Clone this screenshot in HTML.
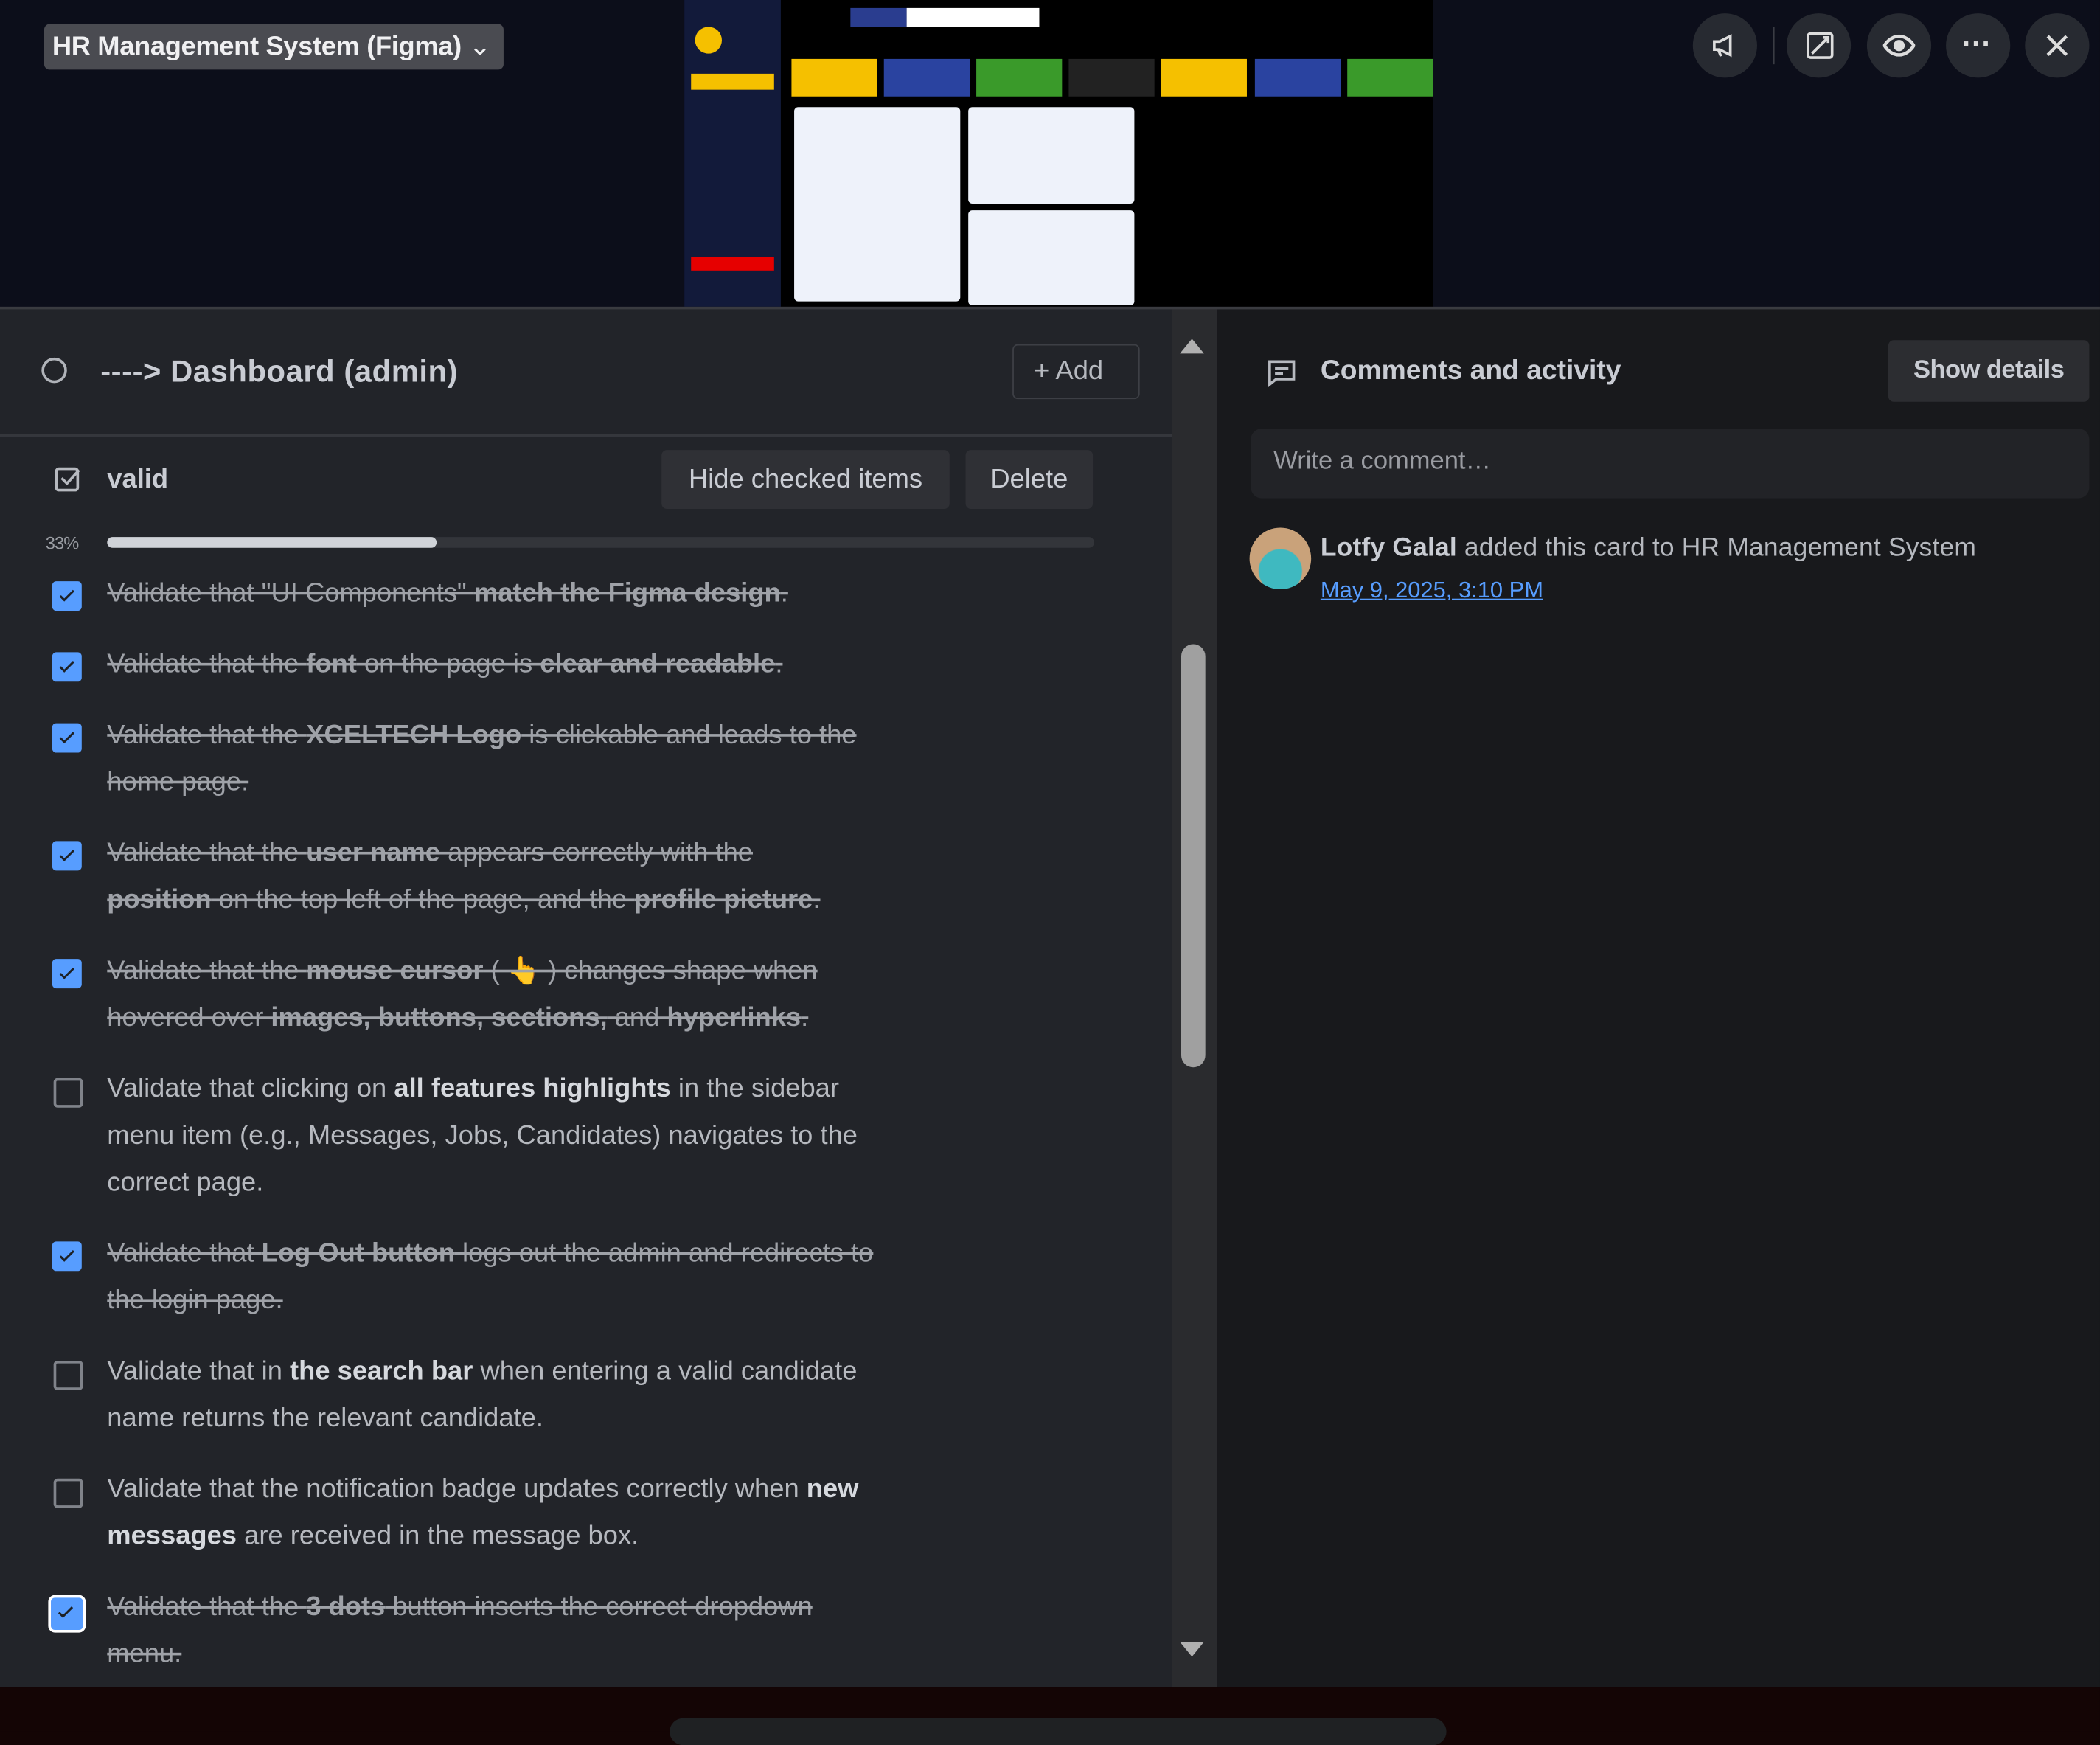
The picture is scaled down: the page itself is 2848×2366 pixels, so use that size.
<!DOCTYPE html>
<html><head><meta charset="utf-8">
<style>
html,body{margin:0;padding:0;width:2848px;height:2348px;overflow:hidden;background:#140505}
#s{position:absolute;left:0;top:0;width:1568px;height:1293px;transform:scale(1.8163,1.8159);transform-origin:0 0;font-family:"Liberation Sans",sans-serif;color:#c9ccd3;background:#0c0e1a}
.a{position:absolute}
.ic{position:absolute;width:48px;height:48px;border-radius:50%;background:#272a31;top:10px}
.it{position:absolute;left:80px;font-size:20px;line-height:35px;letter-spacing:0;width:640px;color:#b6b9bf}
.it.d{text-decoration:line-through;color:#9fa2a8}
.cb{position:absolute;left:39px;width:22px;height:22px;border-radius:3px;background:#579dff}
.cb svg{position:absolute;left:3px;top:3px}
.ub{position:absolute;left:40px;width:18px;height:18px;border:2px solid #80838a;border-radius:3px}
b{color:inherit}
</style></head><body><div id="s">
<div class="a" style="left:33px;top:18px;width:343px;height:34px;background:#4a4b51;border-radius:4px"></div>
<div class="a" style="left:39px;top:22px;font-size:20px;line-height:26px;font-weight:bold;color:#f0f0f2;letter-spacing:-0.2px">HR Management System (Figma) <span style="font-weight:normal">⌄</span></div>
<div class="a" style="left:511px;top:0;width:559px;height:229px;background:#000"></div>
<div class="a" style="left:511px;top:0;width:72px;height:229px;background:#121a3a"></div>
<div class="a" style="left:516px;top:55px;width:62px;height:12px;background:#f5c000"></div>
<div class="a" style="left:516px;top:192px;width:62px;height:10px;background:#e60000"></div>
<div class="a" style="left:519px;top:20px;width:20px;height:20px;border-radius:50%;background:#f5c000"></div>
<div class="a" style="left:635px;top:6px;width:42px;height:14px;background:#2a3d8f"></div>
<div class="a" style="left:677px;top:6px;width:99px;height:14px;background:#fff"></div>
<div class="a" style="left:591px;top:44px;width:64px;height:28px;background:#f5c000"></div>
<div class="a" style="left:660px;top:44px;width:64px;height:28px;background:#2a43a0"></div>
<div class="a" style="left:729px;top:44px;width:64px;height:28px;background:#3a9a2a"></div>
<div class="a" style="left:798px;top:44px;width:64px;height:28px;background:#222"></div>
<div class="a" style="left:867px;top:44px;width:64px;height:28px;background:#f5c000"></div>
<div class="a" style="left:937px;top:44px;width:64px;height:28px;background:#2a43a0"></div>
<div class="a" style="left:1006px;top:44px;width:64px;height:28px;background:#3a9a2a"></div>
<div class="a" style="left:593px;top:80px;width:124px;height:145px;background:#eef2fa;border-radius:3px"></div>
<div class="a" style="left:723px;top:80px;width:124px;height:72px;background:#eef2fa;border-radius:3px"></div>
<div class="a" style="left:723px;top:157px;width:124px;height:71px;background:#eef2fa;border-radius:3px"></div>
<div class="ic" style="left:1264px"></div>
<div class="a" style="left:1324px;top:20px;width:1px;height:28px;background:#3a3c44"></div>
<div class="ic" style="left:1334px"></div>
<div class="ic" style="left:1394px"></div>
<div class="ic" style="left:1453px"></div>
<div class="ic" style="left:1512px"></div>
<svg class="a" style="left:1276px;top:22px" width="24" height="24" viewBox="0 0 24 24" fill="none" stroke="#ddd" stroke-width="2"><path d="M4 9h4l8-4v14l-8-4H4z M7 15l2 5"/></svg>
<svg class="a" style="left:1347px;top:22px" width="24" height="24" viewBox="0 0 24 24" fill="none" stroke="#ddd" stroke-width="2"><rect x="3" y="3" width="18" height="18" rx="2"/><path d="M6 18l12-12M14 6h4v4"/></svg>
<svg class="a" style="left:1406px;top:22px" width="24" height="24" viewBox="0 0 24 24" fill="none" stroke="#ddd" stroke-width="2.4"><path d="M1 12s4-7 11-7 11 7 11 7-4 7-11 7S1 12 1 12z"/><circle cx="12" cy="12" r="3" fill="#ddd"/></svg>
<div class="a" style="left:1465px;top:20px;font-size:22px;color:#ddd;font-weight:bold">···</div>
<svg class="a" style="left:1524px;top:22px" width="24" height="24" viewBox="0 0 24 24" stroke="#ddd" stroke-width="2.4"><path d="M5 5l14 14M19 5L5 19"/></svg>
<div class="a" style="left:0;top:229px;width:1568px;height:2px;background:#3a3b40"></div>
<div class="a" style="left:0;top:231px;width:875px;height:1029px;background:#222429"></div>
<div class="a" style="left:875px;top:231px;width:34px;height:1029px;background:#2a2b2e"></div>
<div class="a" style="left:909px;top:231px;width:659px;height:1029px;background:#18191c"></div>
<div class="a" style="left:0;top:1260px;width:1568px;height:33px;background:#140505"></div>
<div class="a" style="left:500px;top:1283px;width:580px;height:20px;background:#1f2123;border-radius:10px"></div>
<div class="a" style="left:31px;top:267px;width:19px;height:19px;border:2px solid #b0b3b9;border-radius:50%;box-sizing:border-box"></div>
<div class="a" style="left:75px;top:262px;font-size:23px;line-height:30px;font-weight:bold;color:#c9ccd3;letter-spacing:0.3px">----&gt; Dashboard (admin)</div>
<div class="a" style="left:756px;top:257px;width:95px;height:41px;border:1px solid #3d3f45;border-radius:4px;box-sizing:border-box"></div>
<div class="a" style="left:772px;top:264px;font-size:20px;line-height:26px;color:#b6b9bf">+ Add</div>
<div class="a" style="left:0;top:324px;width:875px;height:2px;background:#35373c"></div>
<svg class="a" style="left:40px;top:347px" width="22" height="22" viewBox="0 0 22 22" fill="none" stroke="#b6b9bf" stroke-width="2"><rect x="2" y="3" width="16" height="16" rx="2"/><path d="M6 10l4 4 9-10"/></svg>
<div class="a" style="left:80px;top:345px;font-size:20px;line-height:26px;font-weight:bold;color:#c9ccd3">valid</div>
<div class="a" style="left:494px;top:336px;width:215px;height:44px;background:#2f3035;border-radius:4px"></div>
<div class="a" style="left:494px;top:345px;width:215px;text-align:center;font-size:20px;line-height:26px;color:#c9ccd3">Hide checked items</div>
<div class="a" style="left:721px;top:336px;width:95px;height:44px;background:#2f3035;border-radius:4px"></div>
<div class="a" style="left:721px;top:345px;width:95px;text-align:center;font-size:20px;line-height:26px;color:#c9ccd3">Delete</div>
<div class="a" style="left:34px;top:398px;font-size:13px;color:#9a9da3;letter-spacing:-0.5px">33%</div>
<div class="a" style="left:80px;top:401px;width:737px;height:8px;background:#33353a;border-radius:4px"></div>
<div class="a" style="left:80px;top:401px;width:246px;height:8px;background:#d0d3d8;border-radius:4px"></div>
<div class="cb" style="top:434px"><svg width="16" height="16" viewBox="0 0 16 16" fill="none" stroke="#1d2125" stroke-width="1.6"><path d="M3 8l3 3 7-7"/></svg></div>
<div class="it d" style="top:426px">Validate that "UI Components" <b>match the Figma design</b>.</div>
<div class="cb" style="top:487px"><svg width="16" height="16" viewBox="0 0 16 16" fill="none" stroke="#1d2125" stroke-width="1.6"><path d="M3 8l3 3 7-7"/></svg></div>
<div class="it d" style="top:479px">Validate that the <b>font</b> on the page is <b>clear and readable</b>.</div>
<div class="cb" style="top:540px"><svg width="16" height="16" viewBox="0 0 16 16" fill="none" stroke="#1d2125" stroke-width="1.6"><path d="M3 8l3 3 7-7"/></svg></div>
<div class="it d" style="top:532px">Validate that the <b>XCELTECH Logo</b> is clickable and leads to the<br>home page.</div>
<div class="cb" style="top:628px"><svg width="16" height="16" viewBox="0 0 16 16" fill="none" stroke="#1d2125" stroke-width="1.6"><path d="M3 8l3 3 7-7"/></svg></div>
<div class="it d" style="top:620px">Validate that the <b>user name</b> appears correctly with the<br><b>position</b> on the top left of the page, and the <b>profile picture</b>.</div>
<div class="cb" style="top:716px"><svg width="16" height="16" viewBox="0 0 16 16" fill="none" stroke="#1d2125" stroke-width="1.6"><path d="M3 8l3 3 7-7"/></svg></div>
<div class="it d" style="top:708px">Validate that the <b>mouse cursor</b> ( 👆 ) changes shape when<br>hovered over <b>images, buttons, sections,</b> and <b>hyperlinks</b>.</div>
<div class="ub" style="top:805px"></div>
<div class="it" style="top:796px">Validate that clicking on <b style="color:#d6d9de">all features highlights</b> in the sidebar<br>menu item (e.g., Messages, Jobs, Candidates) navigates to the<br>correct page.</div>
<div class="cb" style="top:927px"><svg width="16" height="16" viewBox="0 0 16 16" fill="none" stroke="#1d2125" stroke-width="1.6"><path d="M3 8l3 3 7-7"/></svg></div>
<div class="it d" style="top:919px">Validate that <b>Log Out button</b> logs out the admin and redirects to<br>the login page.</div>
<div class="ub" style="top:1016px"></div>
<div class="it" style="top:1007px">Validate that in <b style="color:#d6d9de">the search bar</b> when entering a valid candidate<br>name returns the relevant candidate.</div>
<div class="ub" style="top:1104px"></div>
<div class="it" style="top:1095px">Validate that the notification badge updates correctly when <b style="color:#d6d9de">new<br>messages</b> are received in the message box.</div>
<div class="cb" style="top:1191px;left:36px;width:24px;height:24px;border:2px solid #fff;border-radius:5px"><svg width="16" height="16" viewBox="0 0 16 16" fill="none" stroke="#1d2125" stroke-width="1.6"><path d="M3 8l3 3 7-7"/></svg></div>
<div class="it d" style="top:1183px">Validate that the <b>3 dots</b> button inserts the correct dropdown<br>menu.</div>
<div class="a" style="left:881px;top:253px;width:0;height:0;border-left:9px solid transparent;border-right:9px solid transparent;border-bottom:11px solid #b0b0b0"></div>
<div class="a" style="left:881px;top:1226px;width:0;height:0;border-left:9px solid transparent;border-right:9px solid transparent;border-top:11px solid #b0b0b0"></div>
<div class="a" style="left:882px;top:481px;width:18px;height:316px;background:#a0a0a0;border-radius:9px"></div>
<svg class="a" style="left:945px;top:266px" width="24" height="24" viewBox="0 0 24 24" fill="none" stroke="#b6b9bf" stroke-width="2"><path d="M3 4h18v13H8l-5 4z M7 9h10M7 13h6"/></svg>
<div class="a" style="left:986px;top:263px;font-size:20.5px;line-height:28px;font-weight:bold;color:#c9ccd3">Comments and activity</div>
<div class="a" style="left:1410px;top:254px;width:150px;height:46px;background:#2c2d31;border-radius:4px"></div>
<div class="a" style="left:1410px;top:264px;width:150px;text-align:center;font-size:19px;line-height:26px;font-weight:bold;color:#c9ccd3;letter-spacing:-0.3px">Show details</div>
<div class="a" style="left:934px;top:320px;width:626px;height:52px;background:#222327;border-radius:8px"></div>
<div class="a" style="left:951px;top:332px;font-size:19px;line-height:26px;color:#9a9ca2">Write a comment…</div>
<div class="a" style="left:933px;top:394px;width:46px;height:46px;border-radius:50%;background:radial-gradient(circle at 50% 70%,#3fb9c0 0 40%,#c9a27a 42%)"></div>
<div class="a" style="left:986px;top:396px;font-size:19.5px;line-height:26px;color:#b6b9bf;letter-spacing:0.1px"><b style="color:#c9ccd3">Lotfy Galal</b> added this card to HR Management System</div>
<div class="a" style="left:986px;top:430px;font-size:17px;line-height:22px;color:#579dff;text-decoration:underline">May 9, 2025, 3:10 PM</div>
</div></body></html>
